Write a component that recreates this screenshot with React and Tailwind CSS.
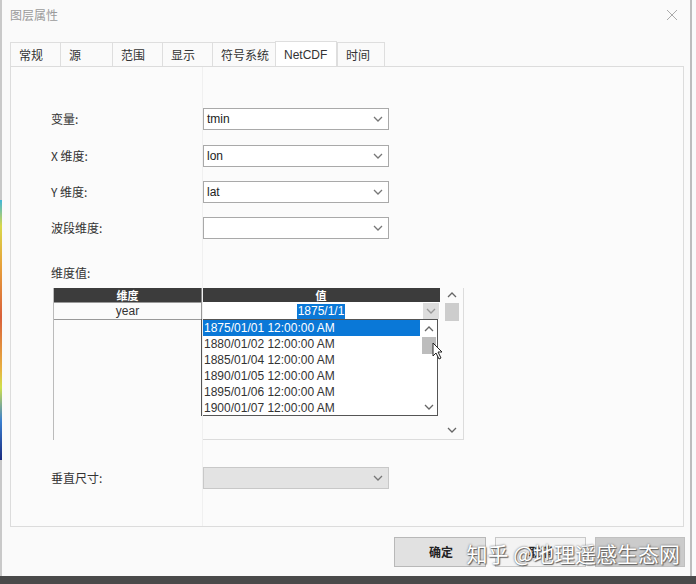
import React from "react";

const cjk = { fontFamily: '"Noto Sans CJK SC", "Liberation Sans", sans-serif' };
const latin = { fontFamily: '"Liberation Sans", "Noto Sans CJK SC", sans-serif' };

function Chevron({ className = "" }) {
  return (
    <svg width="10" height="6" viewBox="0 0 10 6" className={className}>
      <path d="M1 1 L5 5 L9 1" fill="none" stroke="currentColor" strokeWidth="1.3" />
    </svg>
  );
}

function ChevronUp({ className = "" }) {
  return (
    <svg width="10" height="6" viewBox="0 0 10 6" className={className}>
      <path d="M1 5 L5 1 L9 5" fill="none" stroke="currentColor" strokeWidth="1.3" />
    </svg>
  );
}

function Combo({ value, disabled }) {
  return (
    <div
      className={
        "w-[186px] h-[22px] border flex items-center justify-between pl-[3px] pr-[5px] " +
        (disabled ? "bg-[#e3e3e3] border-[#c8c8c8]" : "bg-white border-[#a9a9a9]")
      }
    >
      <span className="text-[12px] text-[#222]" style={latin}>{value}</span>
      <Chevron className="text-[#777]" />
    </div>
  );
}

function Row({ label, value, disabled, className = "" }) {
  return (
    <div className={"flex items-center " + className}>
      <span className="w-[152px] text-[12px] text-[#333]" style={cjk}>{label}</span>
      <Combo value={value} disabled={disabled} />
    </div>
  );
}

const tabs = [
  { t: "常规", w: 50 },
  { t: "源", w: 52 },
  { t: "范围", w: 50 },
  { t: "显示", w: 50 },
  { t: "符号系统", w: 63 },
  { t: "NetCDF", w: 62, active: true },
  { t: "时间", w: 48 },
];

const items = [
  "1875/01/01 12:00:00 AM",
  "1880/01/02 12:00:00 AM",
  "1885/01/04 12:00:00 AM",
  "1890/01/05 12:00:00 AM",
  "1895/01/06 12:00:00 AM",
  "1900/01/07 12:00:00 AM",
];

export default function App() {
  return (
    <div className="w-[696px] h-[584px] bg-[#fafafa] flex flex-col overflow-hidden relative">
      <div className="flex flex-1">
        {/* left edge of the map behind */}
        <div className="w-[2px] flex flex-col">
          <div className="h-[200px] bg-[#c9c9c9]" />
          <div className="h-[260px] bg-[linear-gradient(to_bottom,#3fb6d8_0%,#d8d84a_10%,#e7a23a_25%,#d9603a_45%,#e8b040_65%,#cfe04a_72%,#3a7fd0_85%,#1a2a80_100%)]" />
          <div className="flex-1 bg-[#c9c9c9]" />
        </div>

        <div className="flex-1 flex flex-col">
          {/* title */}
          <div className="h-[30px] flex items-center justify-between pl-[8px] pr-[8px]">
            <span className="text-[12px] text-[#9b9b9b]" style={cjk}>图层属性</span>
            <svg width="12" height="12" viewBox="0 0 12 12" className="text-[#aaa] mr-[4px]">
              <path d="M1 1 L11 11 M11 1 L1 11" stroke="currentColor" strokeWidth="1" />
            </svg>
          </div>

          {/* tabs */}
          <div className="flex items-end h-[36px] pl-[8px]">
            {tabs.map((tab) => (
              <div
                key={tab.t}
                style={{ width: tab.w, ...(tab.t === "NetCDF" ? latin : cjk) }}
                className={
                  "flex items-center pl-[8px] text-[12px] text-[#333] border-l border-[#dedede] " +
                  (tab.active
                    ? "h-[26px] bg-white border-r border-t relative top-[1px]"
                    : "h-[24px] border-t " + (tab.t === "时间" ? "border-r" : ""))
                }
              >
                {tab.t}
              </div>
            ))}
          </div>

          {/* panel */}
          <div className="ml-[8px] mr-[6px] h-[461px] border border-[#dcdcdc] bg-[#fbfbfb] pl-[40px] pt-[41px] relative">
            <Row label="变量:" value="tmin" />
            <Row label="X 维度:" value="lon" className="mt-[15px]" />
            <Row label="Y 维度:" value="lat" className="mt-[14px]" />
            <Row label="波段维度:" value="" className="mt-[14px]" />

            <div className="mt-[25px] text-[12px] text-[#333]" style={cjk}>维度值:</div>

            {/* grid */}
            <div className="mt-[6px] ml-[2px] flex w-[411px] h-[152px] relative">
              <div className="w-[387px] flex flex-col border-l border-[#bbb]">
                <div className="h-[14px] bg-[#3c3c3c] flex text-white text-[11px] font-bold leading-[14px]" style={cjk}>
                  <div className="w-[148px] text-center border-r border-[#888]">维度</div>
                  <div className="flex-1 text-center">值</div>
                </div>
                <div className="h-[18px] flex text-[12px] text-[#333]" style={latin}>
                  <div className="w-[148px] text-center border border-l-0 border-[#999] leading-[16px]">year</div>
                  <div className="flex-1 flex items-center justify-center relative bg-white">
                    <span className="bg-[#0a78d7] text-white px-[1px] leading-[15px]">1875/1/1</span>
                    <div className="absolute right-[1px] top-[1px] w-[16px] h-[16px] bg-[#ddd] flex items-center justify-center">
                      <Chevron className="text-[#999]" />
                    </div>
                  </div>
                </div>
                <div className="flex-1 flex">
                  <div className="w-[148px]" />
                  <div className="flex-1 border-b border-[#dcdcdc]" />
                </div>
              </div>
              {/* outer scrollbar */}
              <div className="w-[24px] flex flex-col items-center border-b border-r border-[#dcdcdc]">
                <ChevronUp className="text-[#666] mt-[4px]" />
                <div className="w-[14px] h-[18px] bg-[#cdcdcd] mt-[5px]" />
                <div className="flex-1" />
                <Chevron className="text-[#666] mb-[6px]" />
              </div>

              {/* open drop-down list */}
              <div className="absolute left-[148px] top-[31px] w-[237px] h-[97px] border border-[#555] bg-white flex">
                <div className="flex-1 flex flex-col text-[12px] text-[#333]" style={latin}>
                  {items.map((it, i) => (
                    <div
                      key={it}
                      className={
                        "h-[16px] leading-[16px] pl-[2px] " +
                        (i === 0 ? "bg-[#0a78d7] text-white" : "")
                      }
                    >
                      {it}
                    </div>
                  ))}
                </div>
                <div className="w-[17px] flex flex-col items-center relative">
                  <ChevronUp className="text-[#666] mt-[6px]" />
                  <div className="w-[14px] h-[17px] bg-[#bdbdbd] mt-[5px]" />
                  <div className="flex-1" />
                  <Chevron className="text-[#666] mb-[5px]" />
                  <svg width="12" height="18" viewBox="0 0 12 18" className="absolute left-[12px] top-[22px]">
                    <path d="M1 1 L1 14 L4 11 L7 17 L9 16 L6 10 L10 10 Z" fill="white" stroke="#222" strokeWidth="1" />
                  </svg>
                </div>
              </div>
            </div>

            <Row label="垂直尺寸:" value="" disabled className="mt-[27px]" />

            {/* faint column line */}
            <div className="absolute left-[191px] top-0 bottom-0 w-px bg-[#f0f0f0] pointer-events-none" />
          </div>

          {/* buttons */}
          <div className="flex justify-end gap-[9px] mt-[10px] pr-[5px] relative">
            <div className="w-[92px] h-[30px] bg-[#e1e1e1] border border-[#b8b8b8] flex items-center justify-end pr-[32px] text-[12px] text-[#222] font-bold" style={cjk}>
              确定
            </div>
            <div className="w-[91px] h-[30px] bg-[#f3f3f3] border border-[#c8c8c8] flex items-center justify-center text-[12px] text-[#222] font-bold" style={cjk}>
              取消
            </div>
            <div className="w-[90px] h-[30px] bg-[#cbcbcb] border border-[#c0c0c0]" />
            <div
              className="absolute right-[10px] top-[1px] text-[21px] text-white leading-[30px] [text-shadow:0_0_2px_#555,1px_1px_1px_#666]"
              style={cjk}
            >
              知乎 @地理遥感生态网
            </div>
          </div>
          <div className="flex-1" />
        </div>

        {/* dialog right border */}
        <div className="w-[2px] bg-[#bdbdbd] mr-[4px]" />
      </div>
      <div className="h-[8px] bg-[#4a4a4a] shrink-0" />
    </div>
  );
}
